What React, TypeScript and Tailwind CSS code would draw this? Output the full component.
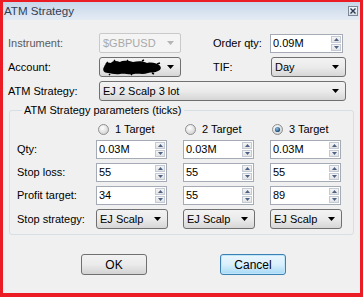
import React from "react";

const Arrow = ({ color = "#000" }: { color?: string }) => (
  <svg width="7" height="4" viewBox="0 0 7 4" className="shrink-0">
    <path d="M0 0H7L3.5 4Z" fill={color} />
  </svg>
);

const Combo = ({
  w,
  text,
  children,
  disabled,
}: {
  w: string;
  text?: string;
  children?: React.ReactNode;
  disabled?: boolean;
}) =>
  disabled ? (
    <div className={`${w} h-[20px] flex items-center justify-between border border-[#c9c9c9] rounded-[2px] bg-[#f4f4f4] pl-[3px] pr-[6px] text-[#a9a9a9]`}>
      <span>{text}</span>
      <Arrow color="#b5b5b5" />
    </div>
  ) : (
    <div className={`${w} h-[20px] flex items-center justify-between border border-[#707070] rounded-[3px] bg-gradient-to-b from-[#f3f3f3] via-[#ebebeb] to-[#d6d6d6] pl-[3px] pr-[6px] text-black`}>
      {children ?? <span>{text}</span>}
      <Arrow />
    </div>
  );

const SpinArrow = ({ up }: { up?: boolean }) => (
  <svg width="5" height="3" viewBox="0 0 5 3">
    <path d={up ? "M0 3H5L2.5 0Z" : "M0 0H5L2.5 3Z"} fill="#4d6185" />
  </svg>
);

const Spin = ({ w, value }: { w: string; value: string }) => (
  <div className={`${w} h-[19px] flex items-stretch border border-[#a4abb5] bg-white`}>
    <span className="flex-1 pl-[2px] leading-[17px] text-black">{value}</span>
    <div className="my-[1px] mr-[1px] flex w-[10px] flex-col gap-[1px]">
      <div className="flex flex-1 items-center justify-center border border-[#c3cad4] bg-gradient-to-b from-[#f5f5f5] to-[#e3e3e3]">
        <SpinArrow up />
      </div>
      <div className="flex flex-1 items-center justify-center border border-[#c3cad4] bg-gradient-to-b from-[#f5f5f5] to-[#e3e3e3]">
        <SpinArrow />
      </div>
    </div>
  </div>
);

const Radio = ({ checked, label, id }: { checked?: boolean; label: string; id: string }) => (
  <div className="flex items-center pl-[2px]">
    <svg width="11" height="11" viewBox="0 0 11 11">
      <defs>
        <radialGradient id={`rg${id}`} cx="0.4" cy="0.35" r="0.7">
          <stop offset="0" stopColor="#ffffff" />
          <stop offset="1" stopColor="#cfcfcf" />
        </radialGradient>
        <radialGradient id={`rd${id}`} cx="0.4" cy="0.35" r="0.7">
          <stop offset="0" stopColor="#8cc0ea" />
          <stop offset="1" stopColor="#12406c" />
        </radialGradient>
      </defs>
      <circle cx="5.5" cy="5.5" r="5" fill={`url(#rg${id})`} stroke="#8e8f8f" strokeWidth="1" />
      {checked && <circle cx="5.5" cy="5.5" r="2.6" fill={`url(#rd${id})`} />}
    </svg>
    <span className="ml-[6px] text-black">{label}</span>
  </div>
);

const Scribble = () => (
  <svg width="60" height="17" viewBox="0 0 60 17" className="-ml-[1px]">
    <path
      d="M2 8 C3 4 6 3 9 4 C11 1 15 2 18 3 C22 1 27 2 31 3 C36 2 41 2 45 4 C50 3 54 4 57 6 C60 8 59 11 56 12 C53 14 49 13 46 14 C41 16 36 14 32 15 C27 16 22 14 18 15 C13 16 9 14 6 14 C2 14 0 11 2 8 Z"
      fill="#000"
    />
    <path d="M4 5 L6 3 M12 2 L13 1 M25 2 L26 1 M40 2 L42 1 M55 5 L58 4 M8 15 L7 16 M30 15 L29 16 M50 14 L52 15" stroke="#000" strokeWidth="1.5" />
  </svg>
);

export default function App() {
  return (
    <div className="h-[297px] w-[363px] bg-[#ec1c24] pb-[4px] pl-[3px] pr-[3px] pt-[2px] font-['Liberation_Sans',Arial,sans-serif] text-[11px] text-black">
      <div className="flex h-full flex-col bg-[#f0f0f0]">
        {/* Title bar */}
        <div className="flex h-[18px] items-center justify-between bg-gradient-to-b from-[#c8d7ea] via-[#d6e1ef] to-[#e4ebf4] pl-[1px] pr-[2px]">
          <span className="text-[11.6px] text-[#2f3f55]">ATM Strategy</span>
          <div className="flex h-[10px] w-[10px] items-center justify-center border border-[#7c8898] bg-gradient-to-b from-[#f4f6f9] to-[#d9dfe7]">
            <svg width="6" height="6" viewBox="0 0 6 6">
              <path d="M0.5 0.5L5.5 5.5M5.5 0.5L0.5 5.5" stroke="#2a3a50" strokeWidth="1.4" />
            </svg>
          </div>
        </div>

        {/* Top rows */}
        <div className="mt-[13px] flex items-center pl-[5px]">
          <span className="w-[91px] text-[#5a5a5a]">Instrument:</span>
          <Combo w="w-[82px]" text="$GBPUSD" disabled />
          <span className="ml-[32px] w-[57px]">Order qty:</span>
          <Spin w="w-[73px]" value="0.09M" />
        </div>
        <div className="mt-[4px] flex items-center pl-[5px]">
          <span className="w-[91px]">Account:</span>
          <Combo w="w-[82px]">
            <Scribble />
          </Combo>
          <span className="ml-[32px] w-[58px]">TIF:</span>
          <Combo w="w-[75px]" text="Day" />
        </div>
        <div className="mt-[4px] flex items-center pl-[5px]">
          <span className="w-[91px]">ATM Strategy:</span>
          <Combo w="w-[247px]" text="EJ 2 Scalp 3 lot" />
        </div>

        {/* Group box */}
        <fieldset className="ml-[6px] mt-[3px] w-[345px] rounded-[3px] border border-[#d5dfe5] pb-[5px] pl-[7px]">
          <legend className="ml-[5px] px-[2px] leading-[13px]">ATM Strategy parameters (ticks)</legend>
          <div className="mt-[6px] flex h-[12px] items-center">
            <div className="w-[79px]" />
            <div className="flex gap-[15px]">
              <div className="w-[72px]"><Radio id="r1" label="1 Target" /></div>
              <div className="w-[72px]"><Radio id="r2" label="2 Target" /></div>
              <div className="w-[72px]"><Radio id="r3" label="3 Target" checked /></div>
            </div>
          </div>
          <div className="mt-[5px] flex items-center">
            <span className="w-[79px]">Qty:</span>
            <div className="flex gap-[16px]">
              <Spin w="w-[71px]" value="0.03M" />
              <Spin w="w-[71px]" value="0.03M" />
              <Spin w="w-[71px]" value="0.03M" />
            </div>
          </div>
          <div className="mt-[4px] flex items-center">
            <span className="w-[79px]">Stop loss:</span>
            <div className="flex gap-[16px]">
              <Spin w="w-[71px]" value="55" />
              <Spin w="w-[71px]" value="55" />
              <Spin w="w-[71px]" value="55" />
            </div>
          </div>
          <div className="mt-[4px] flex items-center">
            <span className="w-[79px]">Profit target:</span>
            <div className="flex gap-[16px]">
              <Spin w="w-[71px]" value="34" />
              <Spin w="w-[71px]" value="55" />
              <Spin w="w-[71px]" value="89" />
            </div>
          </div>
          <div className="mt-[4px] flex items-center">
            <span className="w-[79px]">Stop strategy:</span>
            <div className="flex gap-[15px]">
              <Combo w="w-[72px]" text="EJ Scalp" />
              <Combo w="w-[72px]" text="EJ Scalp" />
              <Combo w="w-[72px]" text="EJ Scalp" />
            </div>
          </div>
        </fieldset>

        {/* Buttons */}
        <div className="mt-[19px] flex pl-[78px]">
          <button className="h-[21px] w-[66px] rounded-[3px] border border-[#707070] bg-gradient-to-b from-[#f2f2f2] via-[#ebebeb] to-[#d3d3d3] text-[12px] text-black">
            OK
          </button>
          <button className="ml-[73px] h-[21px] w-[66px] rounded-[3px] border border-[#3c7fb1] bg-gradient-to-b from-[#eaf6fd] via-[#d9f0fc] to-[#a7d9f5] text-[12px] text-black shadow-[inset_0_0_0_1px_#bfe6fa]">
            Cancel
          </button>
        </div>
      </div>
    </div>
  );
}
